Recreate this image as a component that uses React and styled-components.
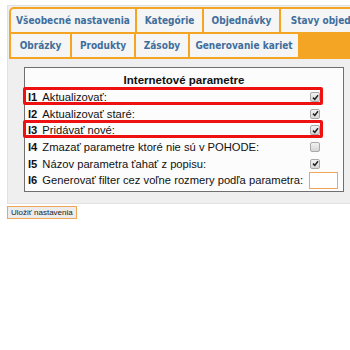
import React from 'react';
import styled, { createGlobalStyle } from 'styled-components';

const GlobalStyle = createGlobalStyle`
  html, body {
    margin: 0;
    padding: 0;
    background: #fff;
    overflow: hidden;
  }
  body {
    font-family: "Liberation Sans", Arial, sans-serif;
  }
`;

const Page = styled.div`
  padding: 5px 0 0 7px;
  width: 380px;
`;

const Panel = styled.div`
  background: #efefef;
  border: 1px solid #e2e2e2;
  border-right: none;
  padding: 1px 0 11px 1px;
`;

const TabBar = styled.div`
  background: #f5a524;
  border-radius: 5px 0 0 0;
  padding: 2px 0 2px 2px;
  display: flex;
  flex-direction: column;
  gap: 2px;
`;

const TabRow = styled.div`
  display: flex;
  gap: 2px;
`;

const Tab = styled.div`
  flex: none;
  width: ${p => p.$w}px;
  height: 23px;
  background: #f5f5f5;
  color: #3f6e9c;
  font-family: "DejaVu Sans Condensed", "DejaVu Sans", Verdana, sans-serif;
  font-stretch: condensed;
  font-weight: bold;
  font-size: 10px;
  display: flex;
  align-items: center;
  justify-content: center;
  white-space: nowrap;
  border-radius: ${p => (p.$first ? '3px 0 0 0' : '0')};
`;

const ParamTable = styled.div`
  margin: 8px 0 0 15px;
  width: 318px;
  border: 1px solid #6f6f6f;
  background: #fcfcfc;
  padding: 3px 0 2px;
`;

const Caption = styled.div`
  text-align: center;
  font-weight: bold;
  font-size: 11.5px;
  color: #111;
  height: 18px;
  line-height: 18px;
`;

const Row = styled.div`
  position: relative;
  display: grid;
  grid-template-columns: 1fr 34px;
  align-items: center;
  height: 16.6px;
  padding-left: 3px;
  font-size: 11.2px;
  color: #111;

  &::after {
    content: '';
    display: ${p => (p.$marked ? 'block' : 'none')};
    position: absolute;
    left: -2px;
    top: -2px;
    width: 300px;
    height: 18px;
    box-sizing: border-box;
    border: 3px solid #ee1111;
    border-radius: 2px;
  }
`;

const Label = styled.span`
  white-space: nowrap;
`;

const Code = styled.b`
  margin-right: 5px;
`;

const Control = styled.div`
  display: flex;
  align-items: center;
  padding-left: 1px;
  position: relative;
`;

const Check = styled.span`
  width: 8px;
  height: 8px;
  border: 1px solid #a9a9a9;
  border-radius: 2px;
  background: linear-gradient(#f2f2f2, #d6d6d6);
  display: inline-flex;
  align-items: center;
  justify-content: center;
`;

const TextBox = styled.div`
  position: absolute;
  left: 0;
  top: -8px;
  width: 27px;
  height: 15px;
  background: #fff;
  border: 1px solid #f0a65a;
`;

const SaveButton = styled.button`
  display: block;
  margin: 2px 0 0 0;
  padding: 0 3px;
  height: 13px;
  font-family: "Liberation Sans", Arial, sans-serif;
  font-size: 8px;
  color: #222;
  background: #ececec;
  border: 1px solid #f0a65a;
  border-radius: 0;
  line-height: 11px;
`;

const Tick = () => (
  <svg width="7" height="7" viewBox="0 0 7 7">
    <path d="M1 3.6 L2.8 5.4 L6 1.2" fill="none" stroke="#222" strokeWidth="1.5" />
  </svg>
);

const tabsTop = [
  ['Všeobecné nastavenia', 124],
  ['Kategórie', 65],
  ['Objednávky', 75],
  ['Stavy objednávok', 110],
];

const tabsBottom = [
  ['Obrázky', 59],
  ['Produkty', 62],
  ['Zásoby', 52],
  ['Generovanie kariet', 108],
];

const params = [
  { code: 'I1', text: 'Aktualizovať:', type: 'check', on: true, marked: true },
  { code: 'I2', text: 'Aktualizovať staré:', type: 'check', on: true },
  { code: 'I3', text: 'Pridávať nové:', type: 'check', on: true, marked: true },
  { code: 'I4', text: 'Zmazať parametre ktoré nie sú v POHODE:', type: 'check', on: false },
  { code: 'I5', text: 'Názov parametra ťahať z popisu:', type: 'check', on: true },
  { code: 'I6', text: 'Generovať filter cez voľne rozmery podľa parametra:', type: 'text' },
];

export default function App() {
  return (
    <>
      <GlobalStyle />
      <Page>
        <Panel>
          <TabBar>
            <TabRow>
              {tabsTop.map(([name, w], i) => (
                <Tab key={name} $w={w} $first={i === 0}>{name}</Tab>
              ))}
            </TabRow>
            <TabRow>
              {tabsBottom.map(([name, w]) => (
                <Tab key={name} $w={w}>{name}</Tab>
              ))}
            </TabRow>
          </TabBar>
          <ParamTable>
            <Caption>Internetové parametre</Caption>
            {params.map(p => (
              <Row key={p.code} $marked={p.marked}>
                <Label><Code>{p.code}</Code>{p.text}</Label>
                <Control>
                  {p.type === 'check' ? (
                    <Check>{p.on && <Tick />}</Check>
                  ) : (
                    <TextBox />
                  )}
                </Control>
              </Row>
            ))}
          </ParamTable>
        </Panel>
        <SaveButton>Uložiť nastavenia</SaveButton>
      </Page>
    </>
  );
}
